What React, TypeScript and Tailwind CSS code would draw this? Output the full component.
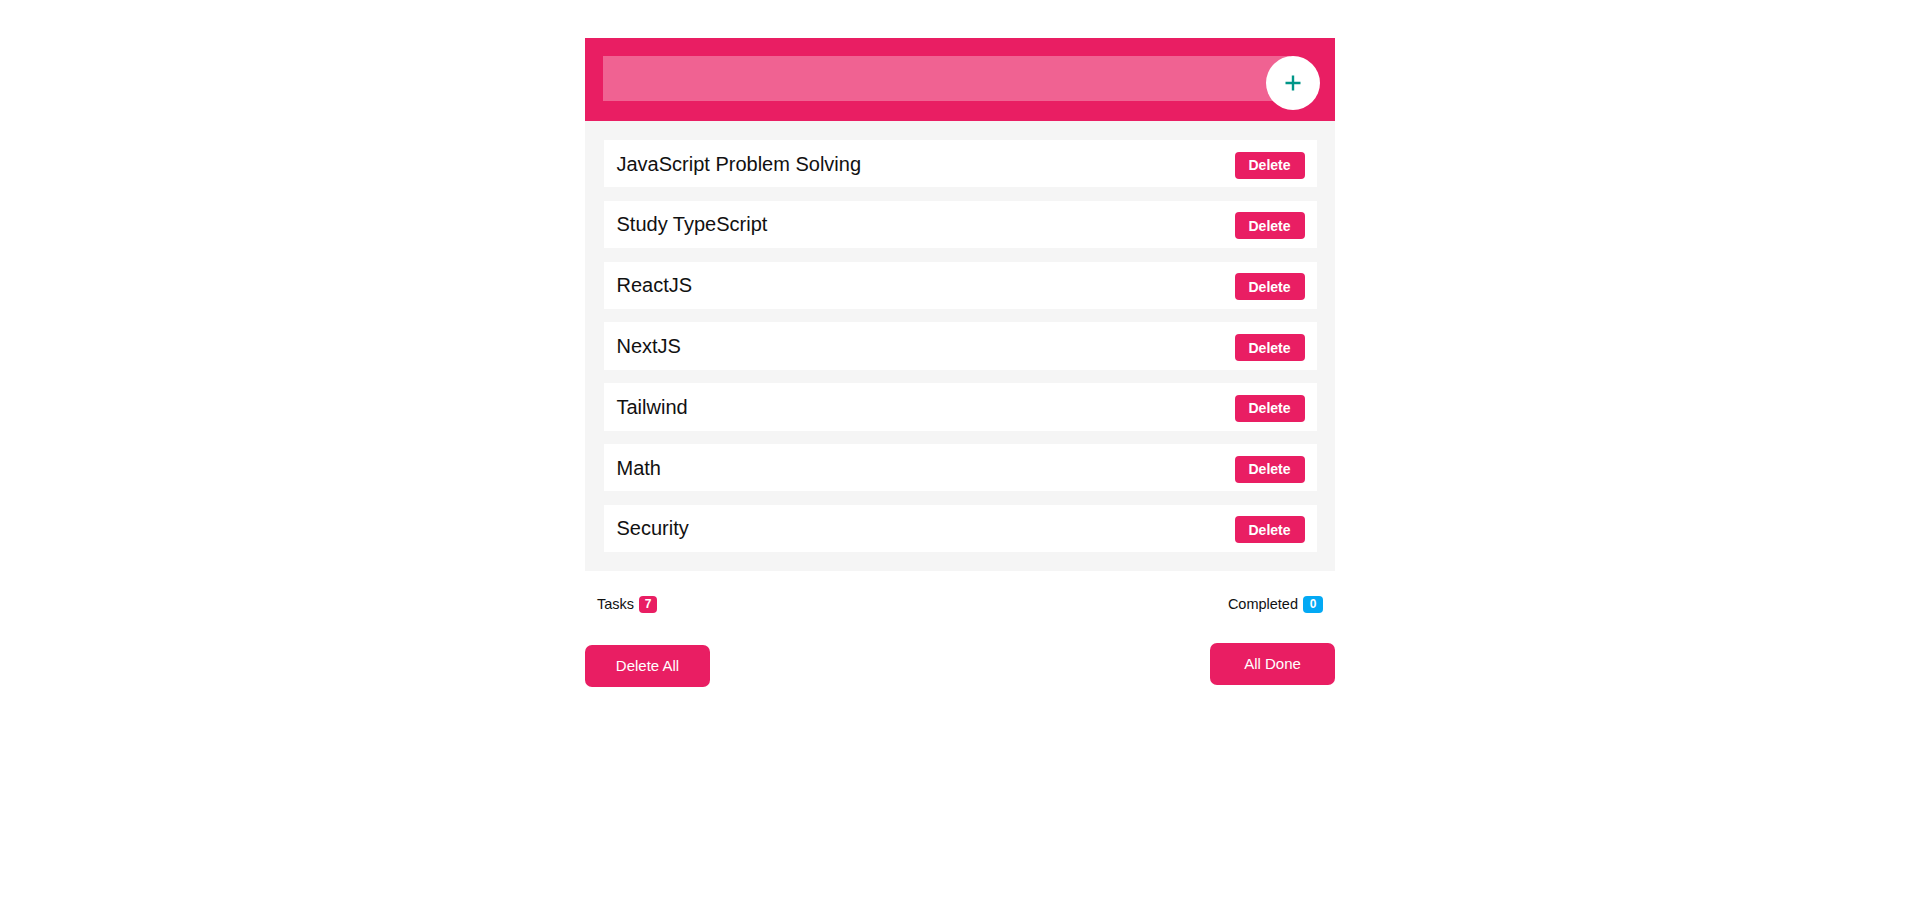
import React from "react";

const tasks = [
  "JavaScript Problem Solving",
  "Study TypeScript",
  "ReactJS",
  "NextJS",
  "Tailwind",
  "Math",
  "Security",
];

export default function App() {
  return (
    <div
      className="min-h-screen bg-white flex justify-center"
      style={{ fontFamily: '"Liberation Sans", Arial, sans-serif' }}
    >
      <div className="w-[750px] mt-[38px]">
        <div className="relative bg-[#E91E63] pl-[18px] pr-[45px] pt-[18px] pb-[20px]">
          <input
            type="text"
            className="block w-full h-[45px] bg-[#F06292] border-0 outline-none px-3 text-white"
          />
          <button className="absolute top-[18px] right-[15px] w-[54px] h-[54px] rounded-full bg-white flex items-center justify-center">
            <svg width="16" height="16" viewBox="0 0 16 16">
              <path d="M8 0.5V15.5M0.5 8H15.5" stroke="#009688" strokeWidth="2.4" fill="none" />
            </svg>
          </button>
        </div>

        <ul className="bg-[#F5F5F5] px-[18.5px] pt-[19px] pb-[18.5px] flex flex-col gap-[13.4px]">
          {tasks.map((t) => (
            <li
              key={t}
              className="h-[47.4px] bg-white flex items-center justify-between pl-[13px] pr-[12px]"
            >
              <span className="text-[20px] text-[#111]">{t}</span>
              <button className="w-[70px] h-[27px] mt-[3px] rounded-[4px] bg-[#E91E63] text-white font-bold text-[14px] leading-none">
                Delete
              </button>
            </li>
          ))}
        </ul>

        <div className="flex justify-between items-center px-[12px] mt-[23px] text-[14.5px] text-[#111]">
          <div className="flex items-center gap-[5px]">
            <span>Tasks</span>
            <span className="h-[17px] w-[18px] rounded-[4px] bg-[#E91E63] text-white text-[12px] font-bold flex items-center justify-center">
              7
            </span>
          </div>
          <div className="flex items-center gap-[5px]">
            <span>Completed</span>
            <span className="h-[17px] w-[20px] rounded-[4px] bg-[#03A9F4] text-white text-[12px] font-bold flex items-center justify-center">
              0
            </span>
          </div>
        </div>

        <div className="flex justify-between items-start mt-[28px]">
          <button className="mt-[2px] w-[125px] h-[42px] rounded-[7px] bg-[#E91E63] text-white text-[15px]">
            Delete All
          </button>
          <button className="w-[125px] h-[42px] rounded-[7px] bg-[#E91E63] text-white text-[15px]">
            All Done
          </button>
        </div>
      </div>
    </div>
  );
}
